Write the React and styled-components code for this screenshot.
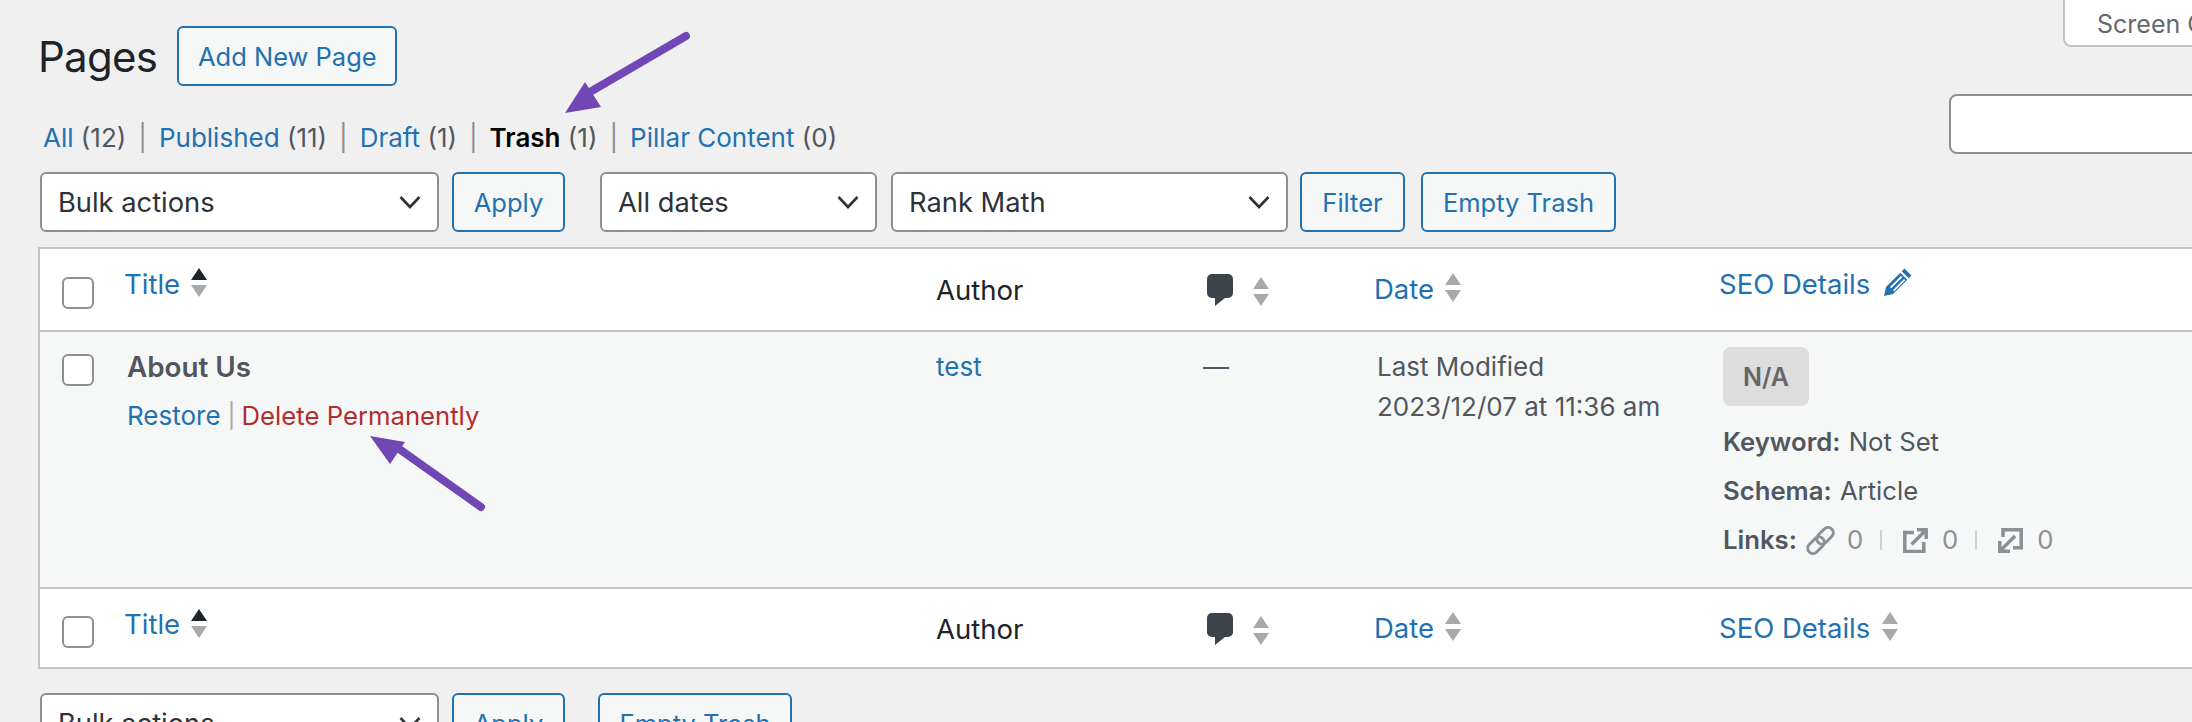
import styled, { createGlobalStyle } from 'styled-components';

const GlobalStyle = createGlobalStyle`
  html, body { margin: 0; padding: 0; background: #f0f0f1; overflow: hidden; }
  body { font-family: Inter, "Liberation Sans", sans-serif; font-size: 26px; color: #3c434a; }
  a { color: #2271b1; text-decoration: none; }
`;

const Page = styled.div`
  position: relative;
  width: 2192px;
  height: 722px;
  overflow: hidden;
  padding-left: 38px;
  box-sizing: border-box;
`;

const ScreenOptions = styled.div`
  position: absolute;
  left: 2063px;
  top: -4px;
  width: 160px;
  height: 51px;
  box-sizing: border-box;
  background: #fff;
  border: 2px solid #c3c4c7;
  border-radius: 0 0 8px 8px;
  padding: 10px 0 0 32px;
  font-size: 25px;
  line-height: 32px;
  color: #646970;
  white-space: nowrap;
`;

const SearchBox = styled.div`
  position: absolute;
  left: 1949px;
  top: 94px;
  width: 300px;
  height: 60px;
  box-sizing: border-box;
  background: #fff;
  border: 2px solid #8c8f94;
  border-radius: 8px;
`;

const Header = styled.div`
  display: flex;
  align-items: center;
  height: 60px;
  padding-top: 26px;
`;

const Heading = styled.h1`
  margin: 0 20px 0 0;
  font-size: 42px;
  font-weight: 400;
  letter-spacing: -0.7px;
  color: #1d2327;
`;

const Button = styled.a`
  display: inline-flex;
  align-items: center;
  justify-content: center;
  box-sizing: border-box;
  width: ${p => p.$w}px;
  height: 60px;
  margin-left: ${p => p.$ml || 0}px;
  border: 2px solid #2271b1;
  border-radius: 6px;
  background: #f6f7f7;
  font-size: 25.500px;
  white-space: nowrap;
`;

const Views = styled.ul`
  display: flex;
  list-style: none;
  margin: 0;
  padding: 38px 0 0 5px;
  height: 26px;
  align-items: center;
  font-size: 26px;
  color: #50575e;
  white-space: pre;
`;

const Current = styled.b`
  font-weight: 600;
  color: #000;
`;

const Count = styled.span`
  color: #50575e;
`;

const Divider = styled.span`
  color: #8c8f94;
  margin: 0 12px;
`;

const Toolbar = styled.div`
  display: flex;
  align-items: flex-start;
  height: 60px;
  margin-top: ${p => p.$mt}px;
  padding-left: 2px;
`;

const Select = styled.div`
  display: flex;
  align-items: center;
  justify-content: space-between;
  box-sizing: border-box;
  width: ${p => p.$w}px;
  height: 60px;
  margin-left: ${p => p.$ml || 0}px;
  padding: 0 16px 0 16px;
  background: #fff;
  border: 2px solid #8c8f94;
  border-radius: 6px;
  font-size: 27.300px;
  color: #2c3338;
`;

const Table = styled.div`
  box-sizing: border-box;
  margin-top: 15px;
  width: 2230px;
  border: 2px solid #c3c4c7;
  border-right: 0;
  background: #fff;
`;

const Row = styled.div`
  display: grid;
  grid-template-columns: 84px 812px 271px 167px 345px 1fr;
  height: ${p => p.$h}px;
  background: ${p => p.$alt ? '#f6f7f7' : '#fff'};
  border-top: ${p => p.$line ? '2px solid #c3c4c7' : '0'};
`;

const CheckCell = styled.div`
  padding: ${p => p.$top}px 0 0 22px;
`;

const Checkbox = styled.span`
  display: block;
  width: 32px;
  height: 32px;
  box-sizing: border-box;
  background: #fff;
  border: 2px solid #8c8f94;
  border-radius: 6px;
`;

const HeadCell = styled.div`
  display: flex;
  align-items: flex-start;
  gap: ${p => p.$gap ?? 10}px;
  padding-top: ${p => p.$top}px;
  font-size: 27.500px;
  line-height: 32px;
  color: #1d2327;
  white-space: nowrap;
`;

const SortWrap = styled.span`
  display: block;
  flex: none;
  margin-top: ${p => p.$mt || 0}px;
`;

const Cell = styled.div`
  padding: ${p => p.$top || 0}px 0 0 ${p => p.$left || 0}px;
  font-size: 26px;
  line-height: 40px;
  color: #50575e;
  white-space: nowrap;
`;

const CommentDash = styled(Cell)`
  margin-left: -4px;
`;

const PageTitle = styled.div`
  font-size: 27.800px;
  font-weight: 600;
  color: #50575e;
  line-height: 32px;
`;

const RowActions = styled.div`
  display: flex;
  align-items: center;
  margin-top: 17px;
  line-height: 32px;
  color: #a7aaad;
`;

const DeleteLink = styled.a`
  color: #b32d2e;
  font-size: 25.700px;
`;

const Sep = styled.span`
  margin: 0 6px 0 7px;
  font-size: 24px;
`;

const Badge = styled.div`
  display: flex;
  align-items: center;
  justify-content: center;
  width: 86px;
  height: 59px;
  background: #dddddd;
  border-radius: 8px;
  font-size: 25px;
  font-weight: 600;
  color: #666;
`;

const Meta = styled.div`
  display: flex;
  align-items: center;
  height: 32px;
  margin-top: ${p => p.$mt}px;
  font-size: 25.700px;
  color: #50575e;
  white-space: pre;
`;

const MetaLabel = styled.b`
  font-weight: 600;
  margin-right: ${p => p.$mr ?? 1}px;
`;

const LinkCount = styled.span`
  display: flex;
  align-items: center;
  color: #8c8f94;
  gap: ${p => p.$gap}px;
`;

const LinkSep = styled.span`
  width: 2px;
  height: 20px;
  background: #d0d2d4;
  margin: 0 21px 0 17px;
`;

const Arrows = styled.svg`
  position: absolute;
  left: 0;
  top: 0;
  pointer-events: none;
`;

const SortIcon = ({ up }) => (
  <svg width="16" height="29" viewBox="0 0 16 29" style={{ flex: 'none' }}>
    <path d="M8 0l8 12H0z" fill={up ? '#1d2327' : '#a7aaad'} />
    <path d="M0 17h16L8 29z" fill="#a7aaad" />
  </svg>
);

const Chevron = () => (
  <svg width="22" height="14" viewBox="0 0 22 14" fill="none" stroke="#2c3338" strokeWidth="2.6">
    <path d="M1.500 2l9.500 10L20.500 2" />
  </svg>
);

const CommentIcon = () => (
  <svg width="26" height="32" viewBox="0 0 26 32">
    <path d="M5 0h16a5 5 0 0 1 5 5v14a5 5 0 0 1-5 5h-3l-10 8v-8H5a5 5 0 0 1-5-5V5a5 5 0 0 1 5-5z" fill="#3c434a" />
  </svg>
);

const PencilIcon = () => (
  <svg width="28" height="28" viewBox="0 0 28 28">
    <path d="M20.500 0.500l7 7-2.800 2.800-7-7zM16.300 4.700l7 7L9 26l-9 2 2-9zM17 8L6 19l1.300 1.300 11-11zM20 11L9 22l1.200 1.200 11-11z" fill="#2271b1" fillRule="evenodd" />
  </svg>
);

const LinkIcon = () => (
  <svg width="29" height="29" viewBox="0 0 29 29" fill="none" stroke="#8c8f94" strokeWidth="3">
    <rect x="9.500" y="4.500" width="19" height="10.500" rx="5.250" transform="rotate(-45 19 9.750)" />
    <rect x="0.500" y="14" width="19" height="10.500" rx="5.250" transform="rotate(-45 10 19.250)" />
  </svg>
);

const ExternalIcon = () => (
  <svg width="25" height="25" viewBox="0 0 25 25" fill="none" stroke="#8c8f94" strokeWidth="3.500">
    <path d="M11 4.500H1.800v19h19V14" />
    <path d="M8.500 16.500L22.500 2.500M14 1.800h9.200V11" />
  </svg>
);

const InternalIcon = () => (
  <svg width="25" height="25" viewBox="0 0 25 25" fill="none" stroke="#8c8f94" strokeWidth="3.500">
    <path d="M5 9V1.800h18.200v18H15" />
    <path d="M17 8L2.500 22.500M1.800 13v10.200H12" />
  </svg>
);

const HeaderRow = ({ first, line }) => (
  <Row $h={first ? 81 : 78} $line={line}>
    <CheckCell $top={first ? 28 : 27}><Checkbox /></CheckCell>
    <HeadCell $top={19} $gap={11}>
      <a href="#">Title</a>
      <SortWrap $mt={first ? 0 : 1}><SortIcon up /></SortWrap>
    </HeadCell>
    <HeadCell $top={first ? 25 : 24}>Author</HeadCell>
    <HeadCell $top={first ? 25 : 24} $gap={20}>
      <CommentIcon />
      <SortWrap $mt={3}><SortIcon /></SortWrap>
    </HeadCell>
    <HeadCell $top={first ? 24 : 23} $gap={11}>
      <a href="#">Date</a>
      <SortIcon />
    </HeadCell>
    <HeadCell $top={first ? 19 : 23} $gap={first ? 14 : 12}>
      <a href="#">SEO Details</a>
      {first ? <PencilIcon /> : <SortIcon />}
    </HeadCell>
  </Row>
);

export default function App() {
  return (
    <Page>
      <GlobalStyle />
      <ScreenOptions>Screen Options</ScreenOptions>
      <SearchBox />
      <Header>
        <Heading>Pages</Heading>
        <Button href="#" $w={220}>Add New Page</Button>
      </Header>
      <Views>
        <li><a href="#">All</a> <Count>(12)</Count><Divider>|</Divider></li>
        <li><a href="#">Published</a> <Count>(11)</Count><Divider>|</Divider></li>
        <li><a href="#">Draft</a> <Count>(1)</Count><Divider>|</Divider></li>
        <li><Current>Trash</Current> <Count>(1)</Count><Divider>|</Divider></li>
        <li><a href="#">Pillar Content</a> <Count>(0)</Count></li>
      </Views>
      <Toolbar $mt={22}>
        <Select $w={399}>Bulk actions<Chevron /></Select>
        <Button href="#" $w={113} $ml={13}>Apply</Button>
        <Select $w={277} $ml={35}>All dates<Chevron /></Select>
        <Select $w={397} $ml={14}>Rank Math<Chevron /></Select>
        <Button href="#" $w={105} $ml={12}>Filter</Button>
        <Button href="#" $w={195} $ml={16}>Empty Trash</Button>
      </Toolbar>
      <Table>
        <HeaderRow first />
        <Row $h={255} $alt $line>
          <CheckCell $top={22}><Checkbox /></CheckCell>
          <Cell $top={19} $left={3}>
            <PageTitle>About Us</PageTitle>
            <RowActions>
              <a href="#">Restore</a>
              <Sep>|</Sep>
              <DeleteLink href="#">Delete Permanently</DeleteLink>
            </RowActions>
          </Cell>
          <Cell $top={15}><a href="#">test</a></Cell>
          <CommentDash $top={15}>—</CommentDash>
          <Cell $top={15} $left={3}>
            Last Modified<br />2023/12/07 at 11:36 am
          </Cell>
          <Cell $top={15} $left={4}>
            <Badge>N/A</Badge>
            <Meta $mt={20}><MetaLabel>Keyword:</MetaLabel> Not Set</Meta>
            <Meta $mt={17}><MetaLabel>Schema:</MetaLabel> Article</Meta>
            <Meta $mt={17}>
              <MetaLabel $mr={9}>Links:</MetaLabel>
              <LinkCount $gap={12}><LinkIcon />0</LinkCount>
              <LinkSep />
              <LinkCount $gap={14}><ExternalIcon />0</LinkCount>
              <LinkSep />
              <LinkCount $gap={14}><InternalIcon />0</LinkCount>
            </Meta>
          </Cell>
        </Row>
        <HeaderRow line />
      </Table>
      <Toolbar $mt={24}>
        <Select $w={399}>Bulk actions<Chevron /></Select>
        <Button href="#" $w={113} $ml={13}>Apply</Button>
        <Button href="#" $w={194} $ml={33}>Empty Trash</Button>
      </Toolbar>
      <Arrows width="2192" height="722" viewBox="0 0 2192 722">
        <path d="M686 36L590 92" stroke="#7047b5" strokeWidth="8" strokeLinecap="round" />
        <path d="M565 113L585 82L601 107z" fill="#7047b5" />
        <path d="M481 507L395 446" stroke="#7047b5" strokeWidth="8" strokeLinecap="round" />
        <path d="M370 436L405 442L390 464z" fill="#7047b5" />
      </Arrows>
    </Page>
  );
}
